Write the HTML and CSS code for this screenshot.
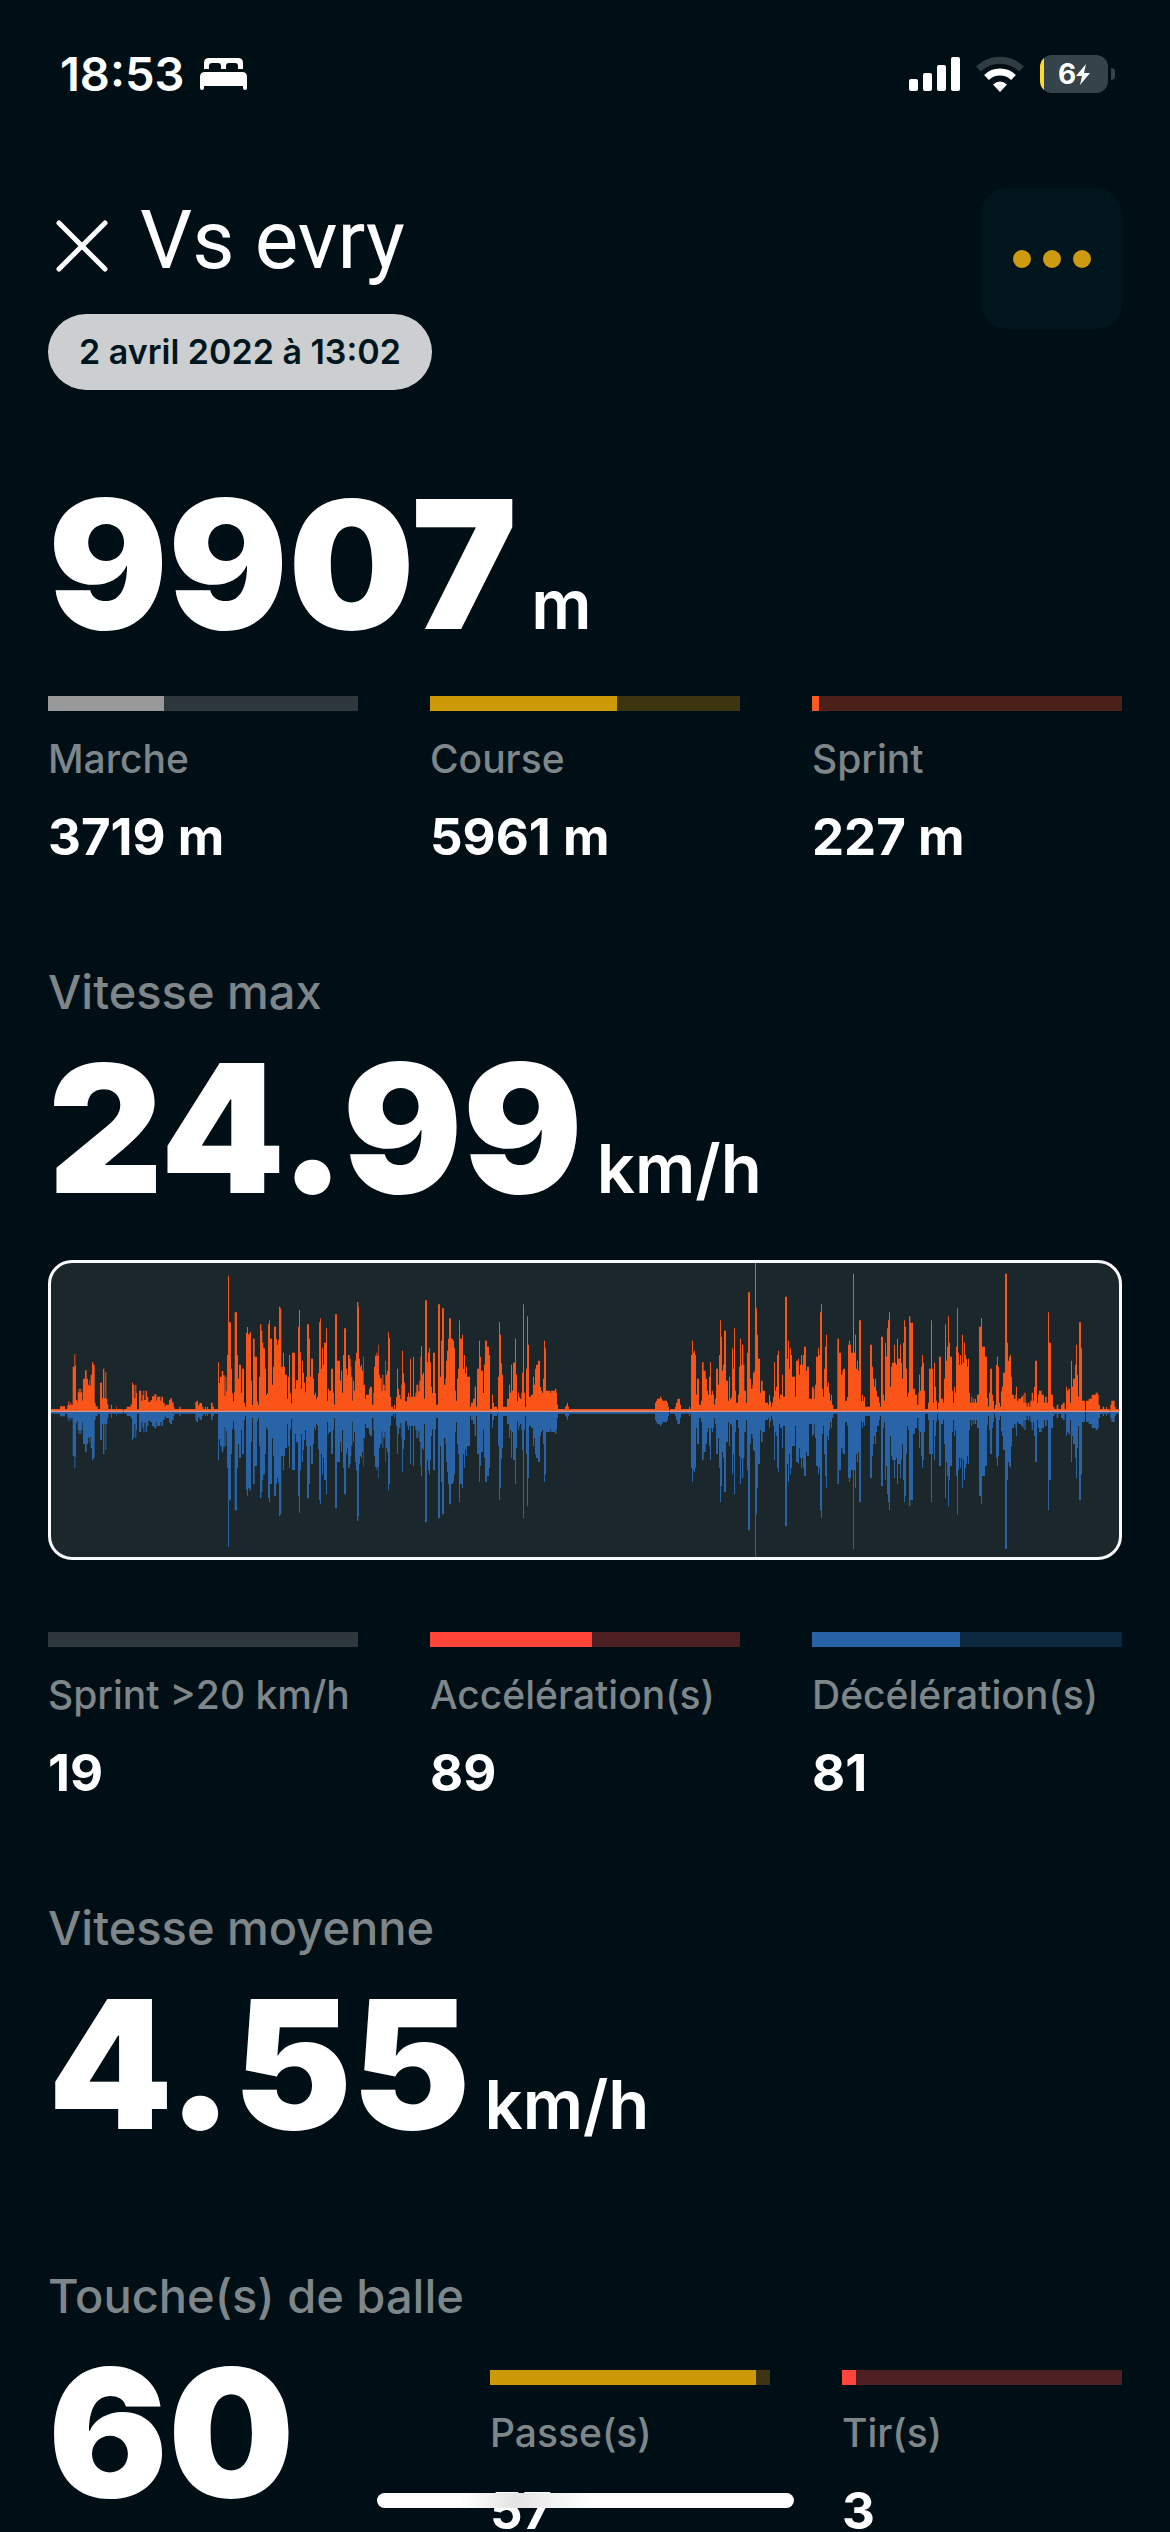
FILE: index.html
```html
<!DOCTYPE html>
<html lang="fr">
<head>
<meta charset="utf-8">
<meta name="viewport" content="width=device-width, initial-scale=1">
<title>Vs evry</title>
<link rel="stylesheet" href="styles.css">
</head>
<body>
<div class="screen">
  <div class="status">
    <div class="status-left">
      <span class="time">18:53</span>
      <svg class="bed" viewBox="0 0 47 32" width="47" height="32" aria-hidden="true">
        <path fill="#fff" d="M4 11V5Q4 0 9 0H38Q43 0 43 5V11H38V8Q38 5 35 5H29Q26 5 26 8V11H21V8Q21 5 18 5H12Q9 5 9 8V11ZM5 14H42Q47 14 47 19V30Q47 32 45 32Q43 32 43 30V28H4V30Q4 32 2 32Q0 32 0 30V19Q0 14 5 14Z"/>
      </svg>
    </div>
    <div class="status-right">
      <svg viewBox="0 0 51 34" width="51" height="34" aria-hidden="true">
        <g fill="#fff"><rect y="22" width="9" height="12" rx="2"/><rect x="14" y="16" width="9" height="18" rx="2"/><rect x="28" y="8" width="9" height="26" rx="2"/><rect x="42" width="9" height="34" rx="2"/></g>
      </svg>
      <svg viewBox="0 0 48 36" width="48" height="36" aria-hidden="true">
        <path fill="none" stroke="#2f3d43" stroke-width="7" d="M2.500 13A31 31 0 0 1 45.500 13"/>
        <path fill="none" stroke="#fff" stroke-width="7" d="M10.500 21.500A19.500 19.500 0 0 1 37.500 21.500"/>
        <path fill="#fff" d="M24 36L17 28.500Q24 22.500 31 28.500Z"/>
      </svg>
      <div class="battery">
        <span class="battery-text">6</span>
        <svg viewBox="0 0 14 21" width="14" height="21" aria-hidden="true"><path fill="#fff" d="M10 0L0 12H6L4 21L14 9H8Z"/></svg>
      </div>
    </div>
  </div>

  <header class="header">
    <div class="heading">
      <div class="title-row">
        <button class="close" type="button" aria-label="Fermer">
          <svg viewBox="0 0 52 52" width="52" height="52" aria-hidden="true"><path fill="none" stroke="#fff" stroke-width="5" stroke-linecap="round" d="M3 3L49 49M49 3L3 49"/></svg>
        </button>
        <h1 class="title">Vs evry</h1>
      </div>
      <span class="date">2 avril 2022 à 13:02</span>
    </div>
    <button class="menu" type="button" aria-label="Options"><i class="dot"></i><i class="dot"></i><i class="dot"></i></button>
  </header>

  <main class="content">
    <section class="distance">
      <p class="big">9907<span class="unit">m</span></p>
      <div class="stats">
        <div class="stat">
          <div class="bar bar-grey"><div class="fill" style="width:37.5%"></div></div>
          <span class="label">Marche</span><strong class="value">3719 m</strong>
        </div>
        <div class="stat">
          <div class="bar bar-gold"><div class="fill" style="width:60.2%"></div></div>
          <span class="label">Course</span><strong class="value">5961 m</strong>
        </div>
        <div class="stat">
          <div class="bar bar-orange"><div class="fill" style="width:2.3%"></div></div>
          <span class="label">Sprint</span><strong class="value">227 m</strong>
        </div>
      </div>
    </section>

    <section class="block">
      <h2 class="caption">Vitesse max</h2>
      <p class="big">24.99<span class="unit">km/h</span></p>
      <div class="chart">
        <svg class="trace" viewBox="0 0 3204 882" preserveAspectRatio="none" role="img" aria-label="Vitesse pendant le match">
          <defs>
            <g id="trace">
              <path transform="translate(-63 -514)" d="M63 514V507H90V499H105V507H112V495H115V484H118V495H121V488H124V495H128V380H133V343H136V376H138V480H141V485H143V457H146V446H149V458H151V446H154V457H157V482H159V416H165V391H170V416H174V434H177V421H179V437H182V404H186V367H190V374H194V488H197V499H203V507H210V428H216V475H219V386H223V475H226V397H229V476H232V493H235V507H243V495H246V507H259V500H261V507H280V514H282V507H290V500H302V493H306V428H309V434H313V475H316V434H319V459H321V507H327V452H334V482H337V465H340V452H343V480H347V452H351V470H355V486H361V481H366V469H373V463H379V482H381V470H391V482H394V470H399V488H404V500H406V494H417V480H421V475H426V487H431V500H433V507H448V500H452V507H496V487H499V482H504V496H508V489H516V500H520V507H525V500H528V507H531V500H534V507H543V488H548V500H552V507H564V367H567V430H570V410H575V393H580V406H584V467H586V410H589V454H591V345H594V107H597V247H603V386H606V460H609V484H612V457H614V217H621V345H624V416H627V374H633V458H636V386H642V488H645V500H648V279H651V261H654V283H659V276H663V422H666V495H669V296H674V350H681V484H684V494H687V410H690V253H694V272H697V308H700V325H705V386H708V465H711V459H714V253H717V241H720V296H726V434H729V380H732V260H738V296H741V314H744V300H747V200H751V206H754V380H759V338H762V380H765V404H771V476H774V410H777V345H780V460H783V490H786V338H795V446H798V421H804V260H807V210H810V337H813V446H816V362H819V398H822V428H825V457H828V410H831V253H837V296H840V410H843V356H849V416H852V465H855V458H858V476H861V470H864V400H867V514Z"/>
              <path transform="translate(777 -514)" d="M27 514V247H30V235H33V386H36V325H39V374H42V308H48V265H51V482H54V446H57V452H63V386H69V458H72V494H75V223H81V362H90V422H93V392H96V458H99V345H102V265H108V386H111V404H114V345H119V356H122V380H124V410H127V482H129V422H132V452H135V362H138V338H141V186H145V200H147V356H150V380H153V374H156V392H159V350H161V434H165V476H168V464H177V446H180V440H186V494H190V458H192V380H195V347H199V338H202V347H205V314H207V404H210V415H215V454H217V404H220V434H224V452H226V362H228V404H231V392H234V277H237V295H240V471H243V500H249V507H252V494H255V507H258V471H261V386H264V446H267V464H271V478H274V434H276V332H279V400H282V428H285V484H291V471H294V458H297V471H300V356H303V470H309V350H312V470H316V458H319V434H325V454H328V422H331V350H333V319H336V404H339V398H342V476H345V181H351V367H354V338H357V325H360V367H363V440H366V460H369V338H375V459H378V494H384V193H390V410H393V302H396V205H402V434H406V416H408V362H411V332H414V296H417V235H423V296H429V302H432V325H435V452H438V482H441V416H444V386H447V241H450V296H456V284H459V386H462V345H465V400H468V380H471V410H480V500H483V488H489V476H494V440H498V500H501V386H507V302H510V350H513V392H519V459H522V374H525V302H531V320H537V345H540V507H546V464H549V488H552V500H561V507H564V410H567V247H570V284H573V370H576V404H579V500H591V476H597V434H600V458H603V374H606V452H609V368H615V296H618V404H621V484H624V458H627V470H630V476H634V458H636V398H639V193H642V458H645V500H648V386H651V229H654V314H657V470H663V464H669V410H672V434H675V386H678V374H684V362H690V441H693V452H696V458H699V416H702V302H705V325H708V452H720V459H722V452H735V447H739V459H741V494H744V507H765V500H768V496H771V488H774V500H777V507H870V514Z"/>
              <path transform="translate(1617 -514)" d="M30 514V507H195V488H198V482H201V476H210V470H214V476H217V482H231V488H234V500H237V514H240V507H255V500H258V488H262V476H270V494H273V507H297V500H300V507H303V345H306V302H309V338H312V332H315V345H318V464H321V416H327V494H333V482H336V367H341V392H347V416H351V452H354V464H357V410H360V367H363V464H366V452H369V464H372V494H375V476H378V386H384V434H387V345H390V241H393V290H396V392H399V374H402V272H408V422H414V482H417V410H420V476H424V470H426V325H429V386H432V265H435V452H438V488H444V464H447V380H450V296H453V374H456V314H460V374H463V452H468V488H471V338H474V157H480V416H483V446H487V434H489V398H493V392H495V69H498V205H501V284H504V356H510V458H513V422H518V452H525V488H534V494H537V465H540V484H543V500H546V488H549V470H552V367H555V452H558V440H561V345H564V332H567V476H570V464H576V404H579V470H585V170H591V356H594V302H597V386H600V325H603V345H606V410H615V470H618V362H624V356H627V404H630V374H633V345H636V374H639V345H642V320H648V392H651V380H657V476H666V440H670V446H673V476H675V434H678V350H684V325H687V345H690V217H693V193H696V446H699V470H702V386H705V320H708V284H711V440H714V428H717V458H720V482H723V464H726V494H730V507H742V296H747V338H753V404H757V392H759V386H765V482H771V471H774V314H777V302H780V314H783V338H789V101H792V338H795V284H798V386H801V362H804V392H807V241H810V514Z"/>
              <path transform="translate(2427 -514)" d="M0 514V241H3V484H6V464H9V482H12V470H15V500H30V314H36V380H39V416H42V440H45V416H48V452H51V470H57V488H60V500H63V290H69V464H72V482H75V308H78V350H81V265H84V241H87V217H90V440H93V380H96V368H102V314H105V368H108V374H111V296H114V356H120V314H123V368H126V416H129V308H132V241H135V260H138V386H141V470H144V458H147V229H151V248H159V446H165V464H171V494H175V458H177V404H180V452H183V380H186V345H189V368H192V452H195V507H204V488H207V386H213V241H216V386H219V488H222V368H225V440H228V482H231V507H234V488H237V350H243V476H249V488H252V416H255V253H258V362H261V320H264V229H267V308H270V350H276V452H279V488H282V440H285V458H288V320H291V205H294V338H297V374H300V345H303V374H306V284H309V368H312V308H315V345H318V356H321V380H324V356H327V458H330V488H334V470H337V488H340V476H343V488H345V476H348V488H351V464H357V260H363V235H366V320H375V350H381V474H384V500H387V458H390V386H396V464H399V482H402V507H405V494H408V374H411V350H414V380H417V488H420V500H423V454H426V440H429V398H435V101H441V308H444V362H447V350H450V345H453V410H456V464H462V476H466V464H468V440H471V482H475V476H483V470H488V464H491V488H493V458H497V488H500V500H503V488H508V500H511V482H515V458H519V482H522V440H525V362H531V488H534V464H537V452H545V464H552V488H555V470H560V488H564V217H567V308H573V464H579V500H583V507H590V494H595V507H603V494H608V488H614V507H618V440H621V452H625V446H630V488H633V362H636V440H639V416H645V374H648V314H651V404H654V470H657V247H663V325H666V482H675V514H678V482H686V476H695V464H707V458H713V464H716V494H720V507H728V500H732V507H738V500H741V507H749V514H751V494H754V482H764V500H767V507H777V514Z"/>
            </g>
          </defs>
          <use href="#trace" transform="translate(0 445)" fill="#fa5419"/>
          <use href="#trace" transform="translate(0 445) scale(1 -1)" fill="#2963a8"/>
          <rect y="443" width="3204" height="4" fill="#d3938f"/>
        </svg>
      </div>
      <div class="stats">
        <div class="stat">
          <div class="bar bar-grey"></div>
          <span class="label">Sprint &gt;20 km/h</span><strong class="value">19</strong>
        </div>
        <div class="stat">
          <div class="bar bar-red"><div class="fill" style="width:52.4%"></div></div>
          <span class="label">Accélération(s)</span><strong class="value">89</strong>
        </div>
        <div class="stat">
          <div class="bar bar-blue"><div class="fill" style="width:47.6%"></div></div>
          <span class="label">Décélération(s)</span><strong class="value">81</strong>
        </div>
      </div>
    </section>

    <section class="block">
      <h2 class="caption">Vitesse moyenne</h2>
      <p class="big">4.55<span class="unit">km/h</span></p>
    </section>

    <section class="block touches">
      <h2 class="caption">Touche(s) de balle</h2>
      <div class="touch-row">
        <p class="big">60</p>
        <div class="stats stats-pair">
          <div class="stat">
            <div class="bar bar-gold"><div class="fill" style="width:95%"></div></div>
            <span class="label">Passe(s)</span><strong class="value">57</strong>
          </div>
          <div class="stat">
            <div class="bar bar-red"><div class="fill" style="width:5%"></div></div>
            <span class="label">Tir(s)</span><strong class="value">3</strong>
          </div>
        </div>
      </div>
    </section>
  </main>
  <div class="home-indicator"></div>
</div>
</body>
</html>
```
FILE: styles.css
```css
* { box-sizing: border-box; }

body {
  margin: 0;
  background: #000f15;
  color: #fff;
  font-family: Inter, "Liberation Sans", sans-serif;
}

h1, h2, p { margin: 0; }

button {
  border: 0;
  padding: 0;
  background: none;
  cursor: pointer;
}

svg { display: block; }

.screen {
  position: relative;
  height: 100vh;
  overflow: hidden;
}

.status {
  display: flex;
  justify-content: space-between;
  align-items: center;
  height: 148px;
  padding: 0 62px 0 60px;
}

.status-left { display: flex; align-items: center; gap: 16px; }
.status-right { display: flex; align-items: center; gap: 16px; }
.time { font-size: 47px; line-height: 56px; font-weight: 600; }

.battery {
  position: relative;
  display: flex;
  align-items: center;
  justify-content: center;
  width: 68px;
  height: 38px;
  border-radius: 12px;
  background: linear-gradient(to right, #fcd92f 4px, #35434a 4px);
}

.battery::after {
  content: "";
  position: absolute;
  right: -7px;
  top: 13px;
  width: 4px;
  height: 12px;
  border-radius: 0 4px 4px 0;
  background: #35434a;
}

.battery-text { font-size: 28px; line-height: 32px; font-weight: 700; }

.header {
  display: flex;
  justify-content: space-between;
  align-items: flex-start;
  padding: 40px 48px 0;
}

.heading { display: flex; flex-direction: column; align-items: flex-start; gap: 26px; }
.title-row { display: flex; align-items: center; gap: 32px; padding: 4px 8px 0; }
.close { padding-top: 12px; }
.title {
  font-family: Roboto, Inter, sans-serif;
  font-size: 82px;
  line-height: 96px;
  font-weight: 400;
}

.date {
  padding: 0 31px;
  border-radius: 38px;
  background: #cccecf;
  color: #00161e;
  font-size: 34px;
  line-height: 76px;
  font-weight: 600;
  white-space: nowrap;
}

.menu {
  display: flex;
  align-items: center;
  justify-content: center;
  gap: 12px;
  width: 141px;
  height: 141px;
  border-radius: 26px;
  background: #00151c;
}

.dot { width: 18px; height: 18px; border-radius: 50%; background: #cc9b10; }

.content { padding: 88px 48px 0; }

.big {
  font-size: 178px;
  line-height: 174px;
  font-weight: 900;
  white-space: nowrap;
}

.unit { margin-left: 14px; font-size: 67px; line-height: 70px; font-weight: 600; }

.stats {
  display: grid;
  grid-template-columns: repeat(3, 1fr);
  column-gap: 72px;
  margin-top: 44px;
}

.stat { display: flex; flex-direction: column; gap: 24px; white-space: nowrap; }
.bar { height: 15px; }
.fill { height: 100%; }
.bar-grey { background: #2e373b; }
.bar-grey .fill { background: #999; }
.bar-gold { background: #3d3411; }
.bar-gold .fill { background: #cc9a06; }
.bar-orange { background: #4b2019; }
.bar-orange .fill { background: #fa5a24; }
.bar-red { background: #4c1f22; }
.bar-red .fill { background: #ff453a; }
.bar-blue { background: #0c2740; }
.bar-blue .fill { background: #2862a6; }

.label { color: #7f868a; font-size: 39px; line-height: 48px; font-weight: 500; }
.value { font-size: 51px; line-height: 60px; font-weight: 700; }

.block { margin-top: 97px; }
.caption {
  margin-bottom: 22px;
  color: #7f868a;
  font-size: 47px;
  line-height: 56px;
  font-weight: 500;
}

.chart {
  height: 300px;
  margin-top: 44px;
  overflow: hidden;
  border: 3px solid #f8fafb;
  border-radius: 24px;
  background: #1c272b;
}

.trace { width: 100%; height: 100%; }
.chart + .stats { margin-top: 72px; }

.touches { margin-top: 116px; }
.touch-row { display: grid; grid-template-columns: 442fr 632fr; align-items: start; }
.stats-pair { grid-template-columns: repeat(2, 1fr); margin-top: 24px; }

.home-indicator {
  position: absolute;
  bottom: 24px;
  left: 50%;
  width: 417px;
  height: 15px;
  margin-left: -208px;
  border-radius: 8px;
  background: linear-gradient(to right, #fff 20%, #e4e4e4 33%, #fff 52%);
}
```
